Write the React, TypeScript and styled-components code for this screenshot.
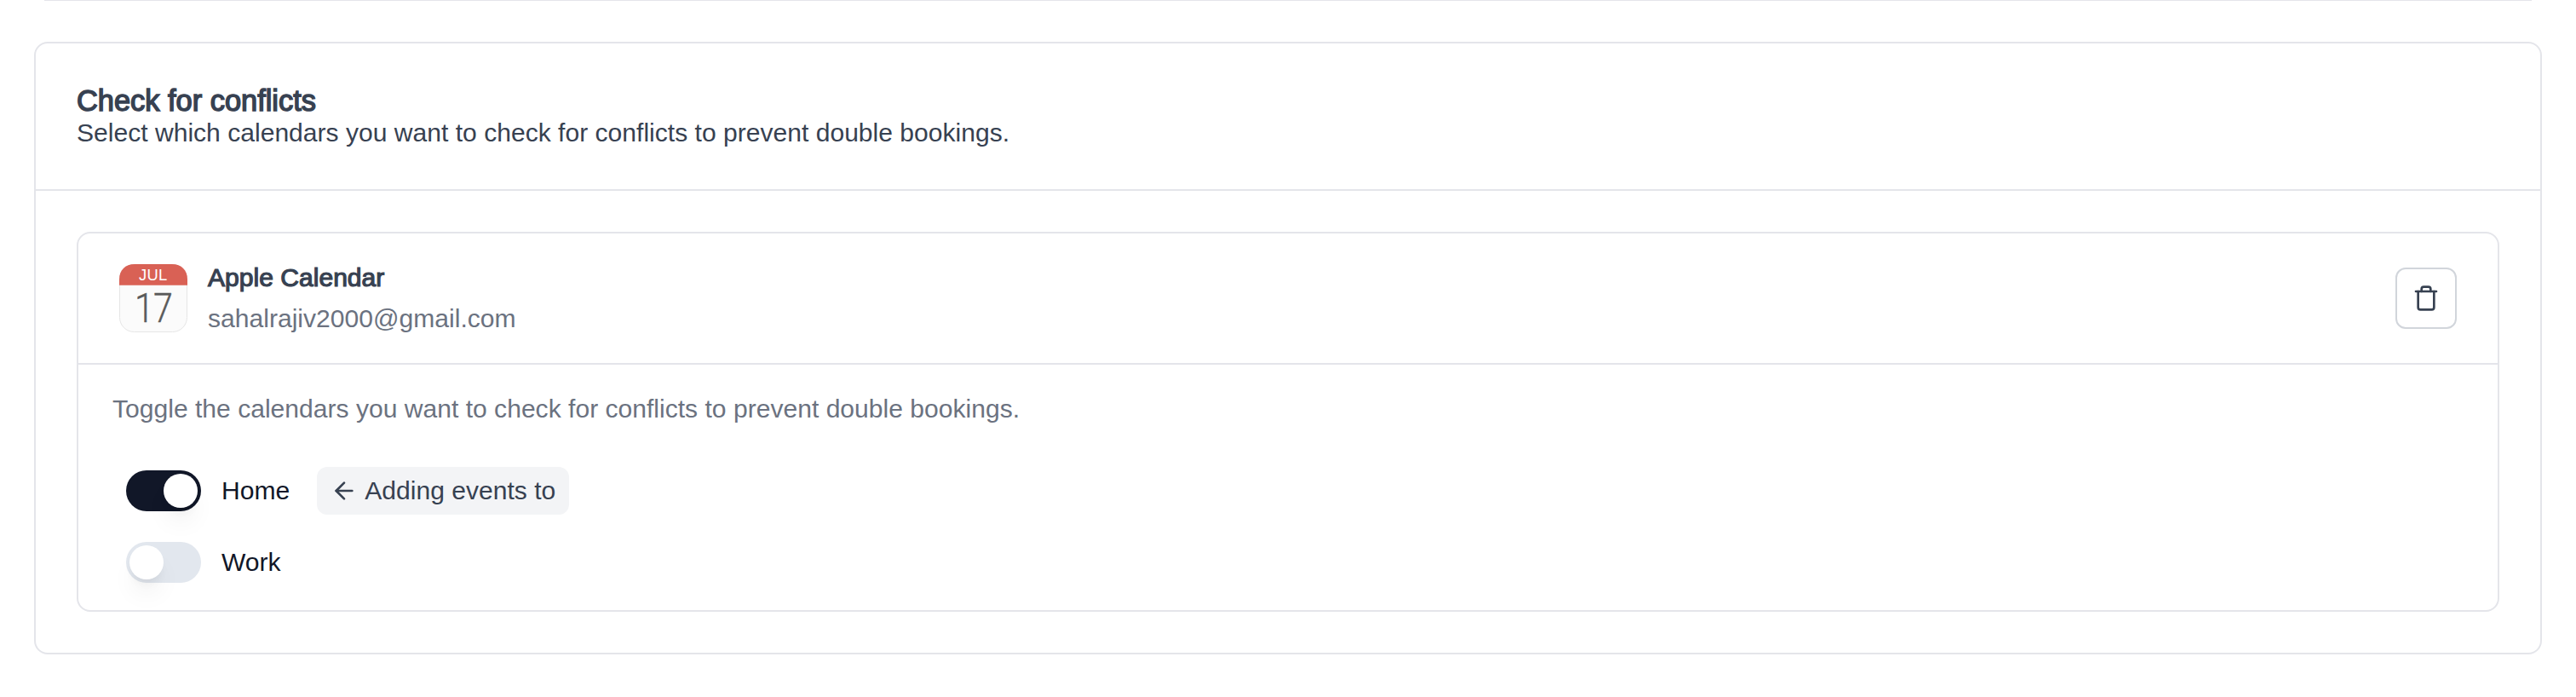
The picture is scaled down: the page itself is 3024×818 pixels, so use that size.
import React from "react";
import styled, { createGlobalStyle } from "styled-components";
import { ArrowLeft, Trash } from "lucide-react";

const sans = `"Liberation Sans", Arial, Helvetica, sans-serif`;

const GlobalStyle = createGlobalStyle`
  *, *::before, *::after { box-sizing: border-box; }
  body {
    margin: 0;
    background: #fff;
    color: #374151;
    font: 30.08px/40px ${sans};
  }
  h2, h3, p, ul { margin: 0; padding: 0; font: inherit; }
  ul { list-style: none; }
`;

const Page = styled.main`
  display: flex;
  flex-direction: column;
  height: 818px;
  overflow: hidden;
`;

const PreviousCardEdge = styled.div`
  flex: none;
  height: 1px;
  margin: 0 52px;
  background: #e4e5ea;
`;

const Card = styled.section`
  margin: 48px 40px 0;
  border: 2px solid #e4e5ea;
  border-radius: 16px;
`;

const CardHeader = styled.header`
  height: 173px;
  padding: 48px;
  border-bottom: 2px solid #e4e5ea;
`;

const Title = styled.h2`
  font-size: 34.4px;
  line-height: 38px;
  -webkit-text-stroke: 1.5px currentColor;
`;

const Subtitle = styled.p`
  line-height: 37px;
`;

const CardBody = styled.div`
  padding: 48px;
`;

const Integration = styled.article`
  border: 2px solid #e4e5ea;
  border-radius: 16px;
`;

const IntegrationHeader = styled.header`
  display: flex;
  align-items: center;
  gap: 24px;
  height: 154px;
  padding: 0 48px;
  border-bottom: 2px solid #e4e5ea;
`;

const CalendarIcon = styled.svg`
  flex: none;
  width: 80px;
  height: 80px;
`;

const Account = styled.div`
  flex: 1;
  padding-bottom: 1px;
`;

const AccountName = styled.h3`
  line-height: 48px;
  -webkit-text-stroke: 1.2px currentColor;
`;

const AccountEmail = styled.p`
  line-height: 48px;
  color: #6b7280;
`;

const DeleteButton = styled.button`
  display: flex;
  align-items: center;
  justify-content: center;
  width: 72px;
  height: 72px;
  padding: 0;
  border: 2px solid #d1d5db;
  border-radius: 12px;
  background: #fff;
  color: #374151;
`;

const IntegrationBody = styled.div`
  padding: 32px 40px 26px;
`;

const Hint = styled.p`
  color: #6b7280;
`;

const CalendarList = styled.ul`
  display: flex;
  flex-direction: column;
  gap: 24px;
  margin-top: 46px;
  padding-left: 16px;
`;

const CalendarRow = styled.li`
  display: flex;
  align-items: center;
  height: 60px;
`;

const Switch = styled.button<{ $on: boolean }>`
  display: flex;
  align-items: center;
  justify-content: ${(p) => (p.$on ? "flex-end" : "flex-start")};
  width: 88px;
  height: 48px;
  padding: 0 4px;
  border: 0;
  border-radius: 24px;
  background: ${(p) => (p.$on ? "#111728" : "#e2e7ee")};
`;

const Thumb = styled.span`
  width: 40px;
  height: 40px;
  border-radius: 50%;
  background: #fff;
  box-shadow: 0 20px 30px -6px rgb(0 0 0 / 0.08), 0 8px 12px -4px rgb(0 0 0 / 0.06);
`;

const CalendarName = styled.span`
  margin-left: 24px;
  color: #111728;
`;

const Badge = styled.span`
  display: flex;
  align-items: center;
  gap: 8px;
  height: 56px;
  margin-left: 32px;
  padding: 0 16px;
  border-radius: 12px;
  background: #f3f4f6;
`;

const calendars = [
  { name: "Home", on: true, destination: true },
  { name: "Work", on: false, destination: false },
];

export default function App() {
  return (
    <>
      <GlobalStyle />
      <Page>
        <PreviousCardEdge />
        <Card>
          <CardHeader>
            <Title>Check for conflicts</Title>
            <Subtitle>
              Select which calendars you want to check for conflicts to prevent double bookings.
            </Subtitle>
          </CardHeader>
          <CardBody>
            <Integration>
              <IntegrationHeader>
                <CalendarIcon viewBox="0 0 80 80" aria-hidden="true">
                  <rect x="0.5" y="0.5" width="79" height="79" rx="17" fill="#fbfbfb" stroke="#e6e6e6" />
                  <path d="M0 24.7V18C0 7 7 0 18 0H62C73 0 80 7 80 18V24.7Z" fill="#d96155" />
                  <text x="39.8" y="19" textAnchor="middle" fontFamily={sans} fontSize="18.4" letterSpacing="0.3" fill="#fff">
                    JUL
                  </text>
                  <text
                    transform="translate(40 67.7) scale(0.84 1)"
                    textAnchor="middle"
                    fontFamily="Roboto, sans-serif"
                    fontWeight="300"
                    fontSize="49"
                    letterSpacing="-1"
                    fill="#5a5a5a"
                    stroke="#5a5a5a"
                    strokeWidth="0.4"
                  >
                    17
                  </text>
                </CalendarIcon>
                <Account>
                  <AccountName>Apple Calendar</AccountName>
                  <AccountEmail>sahalrajiv2000@gmail.com</AccountEmail>
                </Account>
                <DeleteButton aria-label="Delete">
                  <Trash size={32} />
                </DeleteButton>
              </IntegrationHeader>
              <IntegrationBody>
                <Hint>
                  Toggle the calendars you want to check for conflicts to prevent double bookings.
                </Hint>
                <CalendarList>
                  {calendars.map((c) => (
                    <CalendarRow key={c.name}>
                      <Switch $on={c.on} role="switch" aria-checked={c.on} aria-label={c.name}>
                        <Thumb />
                      </Switch>
                      <CalendarName>{c.name}</CalendarName>
                      {c.destination && (
                        <Badge>
                          <ArrowLeft size={32} strokeWidth={2} />
                          Adding events to
                        </Badge>
                      )}
                    </CalendarRow>
                  ))}
                </CalendarList>
              </IntegrationBody>
            </Integration>
          </CardBody>
        </Card>
      </Page>
    </>
  );
}
